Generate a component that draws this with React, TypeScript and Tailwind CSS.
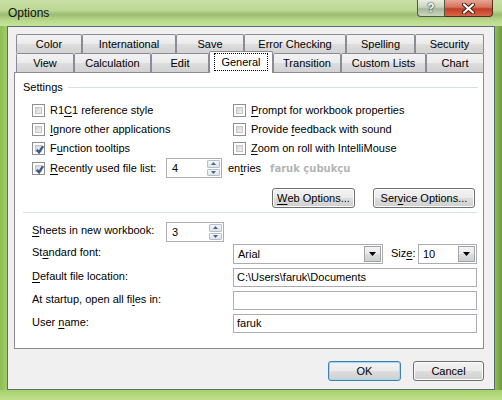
import type { ReactNode } from "react";

const FONT = "font-['Liberation_Sans',Arial,sans-serif]";

function U({ children }: { children: ReactNode }) {
  return <span className="underline underline-offset-[2px]">{children}</span>;
}

function Tab({ w, label, active }: { w: string; label: string; active?: boolean }) {
  if (active) {
    return (
      <div
        className={`${w} relative z-10 -mt-[2px] h-[22px] shrink-0 rounded-t-[2px] border-x border-t border-[#898c95] bg-white flex items-start justify-center pt-[2px]`}
      >
        <span className="px-[6px] py-[1px] leading-[14px] outline outline-1 outline-dotted outline-black">{label}</span>
      </div>
    );
  }
  return (
    <div
      className={`${w} h-[19px] shrink-0 rounded-t-[2px] border-x border-t border-[#898c95] bg-[linear-gradient(180deg,#f3f3f3_0%,#ebebeb_48%,#dddddd_52%,#d2d2d2_100%)] flex items-center justify-center pt-px`}
    >
      {label}
    </div>
  );
}

function Check({ checked }: { checked?: boolean }) {
  return (
    <div className="w-[13px] h-[13px] shrink-0 border border-[#8e8f8f] bg-white p-[2px]">
      <div className="w-full h-full border border-[#c6c6c6] bg-[linear-gradient(135deg,#d3d3d3_0%,#f4f4f4_100%)] relative">
        {checked && (
          <svg viewBox="0 0 9 9" className="absolute -left-[3px] -top-[3px] w-[13px] h-[13px]">
            <path d="M2.6 4.6 L4.2 6.4 L7 2.2" fill="none" stroke="#3b5998" strokeWidth="1.6" />
          </svg>
        )}
      </div>
    </div>
  );
}

function CheckRow({ checked, children }: { checked?: boolean; children: ReactNode }) {
  return (
    <div className="flex items-center gap-[5px] h-[19px]">
      <Check checked={checked} />
      <span>{children}</span>
    </div>
  );
}

function Spin({ value, w }: { value: string; w: string }) {
  return (
    <div className={`${w} h-[20px] border border-[#abadb3] bg-white flex`}>
      <div className="flex-1 pl-[5px] pt-[3px] leading-[13px]">{value}</div>
      <div className="w-[15px] flex flex-col gap-px p-px">
        <div className="flex-1 border border-[#b8bec6] rounded-[1px] bg-[linear-gradient(180deg,#f5f7f9,#dde3ea)] flex items-center justify-center">
          <svg width="5" height="3" viewBox="0 0 5 3">
            <path d="M0 3 L2.5 0 L5 3 Z" fill="#4d6185" />
          </svg>
        </div>
        <div className="flex-1 border border-[#b8bec6] rounded-[1px] bg-[linear-gradient(180deg,#f5f7f9,#dde3ea)] flex items-center justify-center">
          <svg width="5" height="3" viewBox="0 0 5 3">
            <path d="M0 0 L2.5 3 L5 0 Z" fill="#4d6185" />
          </svg>
        </div>
      </div>
    </div>
  );
}

function Combo({ value, w }: { value: string; w: string }) {
  return (
    <div className={`${w} h-[20px] border border-[#abadb3] bg-white flex`}>
      <div className="flex-1 pl-[4px] pt-[3px] leading-[13px]">{value}</div>
      <div className="w-[17px] m-px border border-[#a0a4aa] bg-[linear-gradient(180deg,#f2f2f2_0%,#ebebeb_48%,#dddddd_52%,#cfcfcf_100%)] flex items-center justify-center">
        <svg width="7" height="4" viewBox="0 0 7 4">
          <path d="M0 0 L3.5 4 L7 0 Z" fill="#000" />
        </svg>
      </div>
    </div>
  );
}

function TextBox({ value }: { value?: string }) {
  return (
    <div className="w-[244px] h-[19px] border border-[#abadb3] bg-white pl-[3px] pt-[2px] leading-[13px]">
      {value}
    </div>
  );
}

function Btn({ w, children, def }: { w: string; children: ReactNode; def?: boolean }) {
  return (
    <div
      className={`${w} h-[20px] rounded-[3px] border ${
        def ? "border-[#3c7fb1] shadow-[inset_0_0_0_1px_#9fd8f3]" : "border-[#707070] shadow-[inset_0_0_0_1px_#fcfcfc]"
      } bg-[linear-gradient(180deg,#f2f2f2_0%,#ebebeb_48%,#dddddd_52%,#cfcfcf_100%)] flex items-center justify-center`}
    >
      {children}
    </div>
  );
}

function FieldRow({ label, children, mt }: { label: ReactNode; children: ReactNode; mt: string }) {
  return (
    <div className={`flex items-start ${mt}`}>
      <div className="w-[201px] pt-[2px] leading-[13px]">{label}</div>
      {children}
    </div>
  );
}

export default function App() {
  return (
    <div
      className={`${FONT} text-[11px] text-black w-[502px] h-[400px] overflow-hidden flex flex-col bg-[linear-gradient(90deg,#8fbf55_0%,#a9d06f_2%,#b8d98a_6%,#c4dd9e_50%,#b6d786_94%,#9ccb5e_98%,#6f9a3c_100%)]`}
    >
      {/* Title bar */}
      <div className="h-[26px] flex items-start shrink-0 bg-[linear-gradient(180deg,#c9dfa6_0%,#bcd894_40%,#9dbb72_55%,#b9da8a_80%,#c7e19e_100%)]">
        <div className="pl-[8px] pt-[6px] text-[12px] leading-[14px] text-[#111]">Options</div>
        <div className="flex-1" />
        <div className="flex mr-[9px]">
          <div className="w-[28px] h-[17px] rounded-bl-[4px] border border-t-0 border-[#4b5a44] bg-[linear-gradient(180deg,#e7eedf_0%,#c8d4bb_45%,#a7b59a_55%,#cbd8bc_100%)] flex items-center justify-center text-white font-bold text-[12px] leading-none [text-shadow:0_0_2px_#223,0_0_1px_#223]">
            ?
          </div>
          <div className="w-[48px] h-[17px] rounded-br-[4px] border border-l-0 border-t-0 border-[#5a2a22] bg-[linear-gradient(180deg,#e8a493_0%,#d5735e_45%,#c23c23_55%,#d8664b_100%)] flex items-center justify-center">
            <svg width="13" height="11" viewBox="0 0 13 11">
              <path d="M2 1.5 L11 9.5 M11 1.5 L2 9.5" stroke="#3a1a14" strokeWidth="4" strokeLinecap="round" />
              <path d="M2 1.5 L11 9.5 M11 1.5 L2 9.5" stroke="#fff" strokeWidth="2.2" strokeLinecap="round" />
            </svg>
          </div>
        </div>
      </div>

      {/* Client area */}
      <div className="mx-[7px] h-[364px] shrink-0 border border-[#5e6b77] bg-[#f0f0f0] pt-[7px] pl-[6px] flex flex-col">
        {/* Tabs */}
        <div className="pl-[2px] w-[470px]">
          <div className="flex">
            <Tab w="w-[66px]" label="Color" />
            <Tab w="w-[94px]" label="International" />
            <Tab w="w-[68px]" label="Save" />
            <Tab w="w-[102px]" label="Error Checking" />
            <Tab w="w-[69px]" label="Spelling" />
            <Tab w="w-[69px]" label="Security" />
          </div>
          <div className="flex h-[19px] items-start">
            <Tab w="w-[58px]" label="View" />
            <Tab w="w-[77px]" label="Calculation" />
            <Tab w="w-[58px]" label="Edit" />
            <Tab w="w-[64px]" label="General" active />
            <Tab w="w-[68px]" label="Transition" />
            <Tab w="w-[85px]" label="Custom Lists" />
            <Tab w="w-[58px]" label="Chart" />
          </div>
        </div>

        {/* Panel */}
        <div className="w-[470px] h-[277px] border border-[#898c95] bg-white flex flex-col leading-[13px]">
          <div className="mt-[8px] ml-[8px] mr-[5px] flex items-center">
            <span>Settings</span>
            <div className="ml-[5px] flex-1 h-px bg-[#d5dfe5]" />
          </div>

          <div className="mt-[7px] pl-[17px] flex">
            <div className="w-[201px] flex flex-col">
              <CheckRow>
                R1<U>C</U>1 reference style
              </CheckRow>
              <CheckRow>
                <U>I</U>gnore other applications
              </CheckRow>
              <CheckRow checked>
                F<U>u</U>nction tooltips
              </CheckRow>
            </div>
            <div className="flex flex-col">
              <CheckRow>
                <U>P</U>rompt for workbook properties
              </CheckRow>
              <CheckRow>
                Provide <U>f</U>eedback with sound
              </CheckRow>
              <CheckRow>
                <U>Z</U>oom on roll with IntelliMouse
              </CheckRow>
            </div>
          </div>

          <div className="pl-[17px] flex items-center h-[20px]">
            <div className="w-[134px] flex items-center gap-[5px]">
              <Check checked />
              <span>
                <U>R</U>ecently used file list:
              </span>
            </div>
            <Spin value="4" w="w-[56px]" />
            <span className="ml-[6px]">
              en<U>t</U>ries
            </span>
            <span className="ml-[9px] font-bold text-[#b4b4b4] font-['DejaVu_Sans',sans-serif] text-[10px]">
              faruk çubukçu
            </span>
          </div>

          <div className="mt-[10px] ml-[257px] flex gap-[18px]">
            <Btn w="w-[83px]">
              <U>W</U>eb Options...
            </Btn>
            <Btn w="w-[102px]">
              Ser<U>v</U>ice Options...
            </Btn>
          </div>

          <div className="mt-[4px] ml-[8px] mr-[6px] h-px bg-[#d5dfe5]" />

          <div className="pl-[17px] flex flex-col">
            <div className="mt-[9px] flex items-start">
              <div className="w-[134px] pt-[2px]">
                <U>S</U>heets in new workbook:
              </div>
              <Spin value="3" w="w-[58px]" />
            </div>
            <FieldRow
              mt="mt-[2px]"
              label={
                <>
                  St<U>a</U>ndard font:
                </>
              }
            >
              <Combo value="Arial" w="w-[150px]" />
              <div className="w-[35px] pl-[8px] pt-[3px]">
                Siz<U>e</U>:
              </div>
              <Combo value="10" w="w-[59px]" />
            </FieldRow>
            <FieldRow
              mt="mt-[4px]"
              label={
                <>
                  <U>D</U>efault file location:
                </>
              }
            >
              <TextBox value="C:\Users\faruk\Documents" />
            </FieldRow>
            <FieldRow
              mt="mt-[4px]"
              label={
                <>
                  At startup, open all fi<U>l</U>es in:
                </>
              }
            >
              <TextBox />
            </FieldRow>
            <FieldRow
              mt="mt-[4px]"
              label={
                <>
                  User <U>n</U>ame:
                </>
              }
            >
              <TextBox value="faruk" />
            </FieldRow>
          </div>
        </div>

        {/* Dialog buttons */}
        <div className="mt-[12px] ml-[314px] flex gap-[12px]">
          <Btn w="w-[73px]" def>
            OK
          </Btn>
          <Btn w="w-[71px]">Cancel</Btn>
        </div>
      </div>

      <div className="flex-1 bg-[linear-gradient(180deg,#a8d06c,#bfe08c)]" />
    </div>
  );
}
